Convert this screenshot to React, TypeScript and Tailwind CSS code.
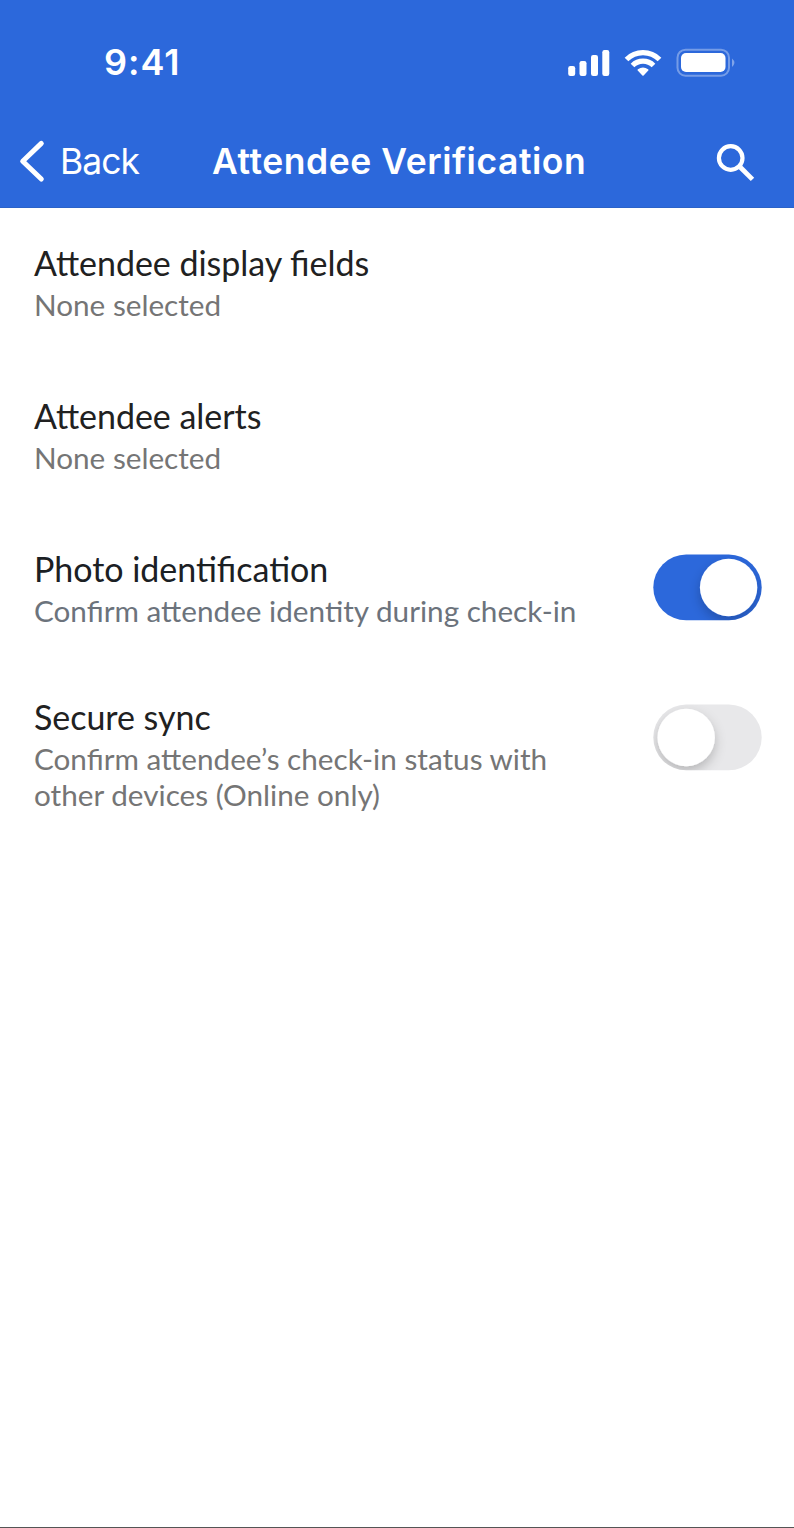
function Toggle({ on }: { on: boolean }) {
  return (
    <svg width="124" height="82" viewBox="646 547 124 82" className="shrink-0 overflow-visible" role="switch" aria-checked={on}>
      <defs>
        <filter id={on ? "s1" : "s0"} x="-40%" y="-40%" width="180%" height="180%">
          <feDropShadow dx="0" dy="5" stdDeviation="6" floodColor="#000" floodOpacity="0.22" />
        </filter>
        <clipPath id={on ? "c1" : "c0"}><rect x="653.300" y="554.500" width="108.400" height="65.800" rx="32.900" /></clipPath>
      </defs>
      <g clipPath={on ? "url(#c1)" : "url(#c0)"}>
        <rect x="653" y="554" width="109" height="67" fill={on ? "#2c68db" : "#e8e8ea"} />
        <circle cx={on ? 728.6 : 686.2} cy="587.500" r="28.700" fill="#fff" filter={on ? "url(#s1)" : "url(#s0)"} />
      </g>
    </svg>
  );
}

function Setting({ title, lines, on }: { title: string; lines: string[]; on?: boolean }) {
  return (
    <div className="flex justify-between pl-[34px] pr-6">
      <div>
        <h2 className={`mb-[3px] text-[34px] leading-[42px] tracking-[-0.03px] whitespace-nowrap [font-feature-settings:'liga'] ${on ? "text-[#1b2024]" : "text-[#212121]"}`}>{title}</h2>
        {lines.map((line) => (
          <p key={line} className={`text-[29.700px] leading-9 whitespace-nowrap ${on ? "text-[#6c737c]" : "text-[#757575]"}`}>{line}</p>
        ))}
      </div>
      {on !== undefined && <div className={`h-[82px] ${on ? "-mt-px" : "mt-px"}`}><Toggle on={on} /></div>}
    </div>
  );
}

export default function App() {
  return (
    <main className="flex h-[1528px] w-[794px] flex-col border-b border-[#555] bg-white font-['Lato',sans-serif]">
      <header className="h-[208px] border-b border-[#2b62c8] bg-[#2c68db] font-['Inter',sans-serif] text-white">
        <div className="flex h-[116px] justify-between pt-[39px] pl-[104px] pr-[59px]">
          <span className="text-[36px] leading-[46px] font-semibold tracking-[1px]">9:41</span>
          <svg width="168" height="30" viewBox="567 47 168 30" className="mt-2 overflow-visible" fill="white">
            <rect x="568.200" y="66" width="7" height="10" rx="2.200" />
            <rect x="579.500" y="61" width="7" height="15" rx="2.200" />
            <rect x="591" y="55" width="7" height="21" rx="2.200" />
            <rect x="602.300" y="50" width="7" height="26" rx="2.200" />
            <g fill="none" stroke="white" strokeWidth="5.200">
              <path d="M626.500 59.500A23.300 23.300 0 0 1 659.500 59.500" />
              <path d="M632.500 65.500A14.900 14.900 0 0 1 653.500 65.500" />
            </g>
            <path d="M637.700 70.600Q637 69.900 637.900 69.200A8.800 8.800 0 0 1 648.100 69.200Q649 69.900 648.300 70.600L643.600 75.500Q643 76.100 642.400 75.500Z" />
            <rect x="677.500" y="49.700" width="51.500" height="26" rx="8" fill="none" stroke="white" strokeOpacity=".35" strokeWidth="2" />
            <rect x="681" y="53" width="44.500" height="19" rx="5" />
            <path d="M732 58.500v8.400q4.800-4.200 0-8.400" opacity=".4" />
          </svg>
        </div>
        <div className="flex h-[91px] items-start">
          <svg width="28" height="44" viewBox="18 139 28 44" className="mt-[23px] ml-[18px]" fill="none" stroke="white" strokeWidth="5"><path d="M41.300 143.400L22.700 161.200L41.300 179" strokeLinecap="round" strokeLinejoin="round" /></svg>
          <span className="mt-[23px] ml-[14px] w-[152px] text-[35.500px] leading-[46px] font-normal tracking-[-1px]">Back</span>
          <h1 className="mt-[23px] text-[35.500px] leading-[46px] font-semibold tracking-[0.550px] whitespace-nowrap">Attendee Verification</h1>
          <svg width="40" height="40" viewBox="715 143 40 40" className="mt-[27px] mr-[39px] ml-auto" fill="none" stroke="white" strokeWidth="4.200"><circle cx="730.700" cy="158" r="11.800" /><path d="M738.500 165.500L740.500 167.500" strokeWidth="3.500" /><path d="M740.300 167.200L752.500 179.400" strokeWidth="4.800" /></svg>
        </div>
      </header>
      <div className="h-[153px] pt-[34px]"><Setting title="Attendee display fields" lines={["None selected"]} /></div>
      <div className="h-[153px] pt-[34px]"><Setting title="Attendee alerts" lines={["None selected"]} /></div>
      <div className="h-[148px] pt-[34px]"><Setting title="Photo identification" lines={["Confirm attendee identity during check-in"]} on /></div>
      <div className="pt-[34px]"><Setting title="Secure sync" lines={["Confirm attendee’s check-in status with", "other devices (Online only)"]} on={false} /></div>
    </main>
  );
}
